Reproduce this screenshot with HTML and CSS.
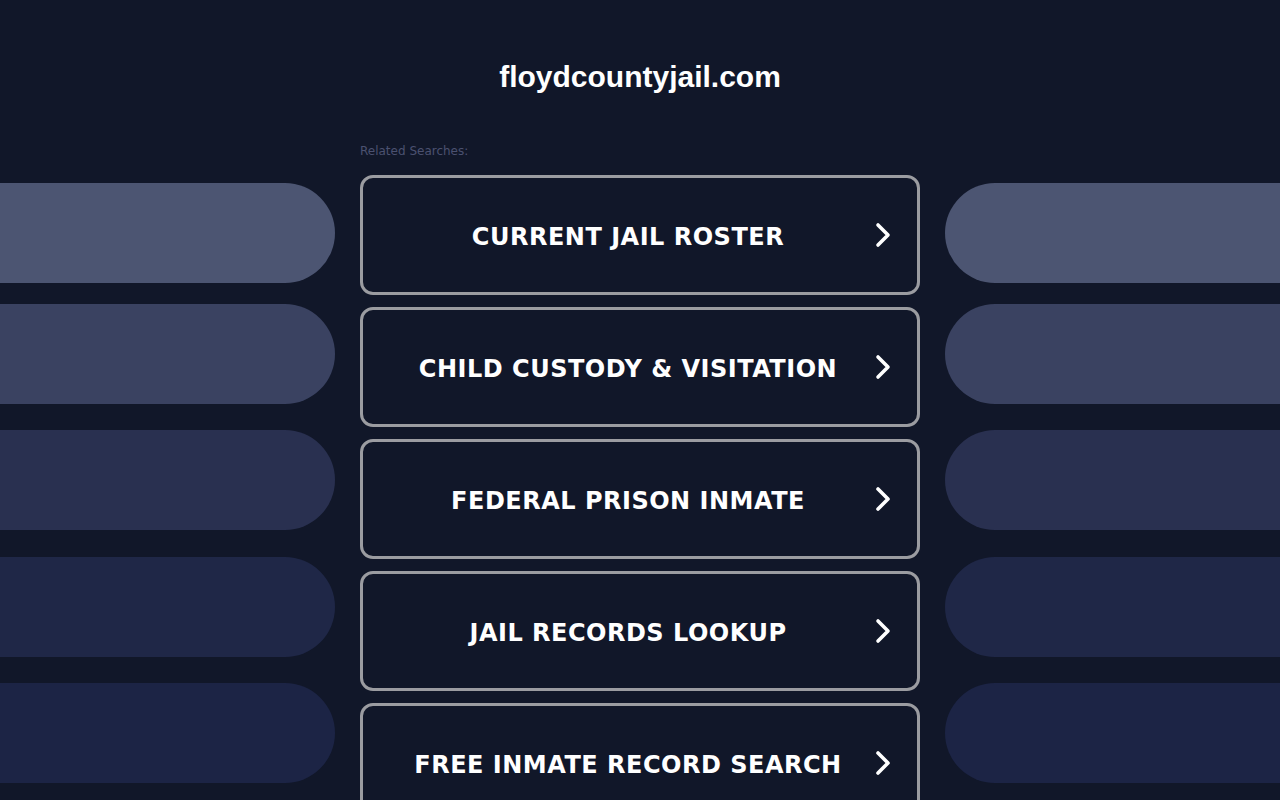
FILE: index.html
```html
<!DOCTYPE html>
<html lang="en">
<head>
<meta charset="utf-8">
<title>floydcountyjail.com</title>
<link rel="stylesheet" href="styles.css">
</head>
<body>
<div class="page">
  <header class="header">
    <h1 class="domain">floydcountyjail.com</h1>
  </header>
  <div class="layout">
    <div class="side side-left">
      <div class="pill pill-1"></div>
      <div class="pill pill-2"></div>
      <div class="pill pill-3"></div>
      <div class="pill pill-4"></div>
      <div class="pill pill-5"></div>
    </div>
    <main class="center">
      <div class="related">Related Searches:</div>
      <ul class="links">
        <li><a class="link" href="#"><span class="label">CURRENT JAIL ROSTER</span><svg class="chev" viewBox="0 0 16 26"><path d="M3 3 L13 13 L3 23" /></svg></a></li>
        <li><a class="link" href="#"><span class="label">CHILD CUSTODY &amp; VISITATION</span><svg class="chev" viewBox="0 0 16 26"><path d="M3 3 L13 13 L3 23" /></svg></a></li>
        <li><a class="link" href="#"><span class="label">FEDERAL PRISON INMATE</span><svg class="chev" viewBox="0 0 16 26"><path d="M3 3 L13 13 L3 23" /></svg></a></li>
        <li><a class="link" href="#"><span class="label">JAIL RECORDS LOOKUP</span><svg class="chev" viewBox="0 0 16 26"><path d="M3 3 L13 13 L3 23" /></svg></a></li>
        <li><a class="link" href="#"><span class="label">FREE INMATE RECORD SEARCH</span><svg class="chev" viewBox="0 0 16 26"><path d="M3 3 L13 13 L3 23" /></svg></a></li>
      </ul>
    </main>
    <div class="side side-right">
      <div class="pill pill-1"></div>
      <div class="pill pill-2"></div>
      <div class="pill pill-3"></div>
      <div class="pill pill-4"></div>
      <div class="pill pill-5"></div>
    </div>
  </div>
</div>
</body>
</html>
```
FILE: styles.css
```css
html, body {
  margin: 0;
  padding: 0;
  background: #111729;
  height: 100%;
  overflow: hidden;
}
.page {
  width: 1280px;
  height: 800px;
  overflow: hidden;
}
.header {
  height: 140px;
  padding-top: 58px;
  box-sizing: border-box;
  text-align: center;
}
.domain {
  margin: 0;
  font-family: "Liberation Sans", Arial, sans-serif;
  font-weight: bold;
  font-size: 30px;
  line-height: 38px;
  color: #ffffff;
}
.layout {
  display: flex;
  gap: 25px;
}
.side {
  width: 335px;
  flex: none;
  display: flex;
  flex-direction: column;
  padding-top: 43px;
}
.pill {
  height: 100px;
  flex: none;
}
.side-left .pill { border-radius: 0 50px 50px 0; }
.side-right .pill { border-radius: 50px 0 0 50px; }
.pill-1 { background: #4c5572; }
.pill-2 { background: #3a4261; margin-top: 21px; }
.pill-3 { background: #293050; margin-top: 26px; }
.pill-4 { background: #1f2747; margin-top: 27px; }
.pill-5 { background: #1c2445; margin-top: 26px; }
.center {
  width: 560px;
  flex: none;
}
.related {
  font-family: "DejaVu Sans", Verdana, sans-serif;
  font-size: 12px;
  line-height: 16px;
  color: #4b5170;
  padding-top: 3px;
  height: 35px;
  box-sizing: border-box;
}
.links {
  list-style: none;
  margin: 0;
  padding: 0;
  display: flex;
  flex-direction: column;
  gap: 12px;
}
.link {
  display: flex;
  align-items: center;
  justify-content: center;
  position: relative;
  height: 120px;
  box-sizing: border-box;
  border: 3px solid #9b9ca1;
  border-radius: 13px;
  text-decoration: none;
  padding-right: 24px;
  padding-top: 4px;
}
.label {
  font-family: "DejaVu Sans", Verdana, sans-serif;
  font-weight: bold;
  font-size: 24px;
  letter-spacing: 0.5px;
  color: #ffffff;
}
.chev {
  position: absolute;
  right: 26px;
  top: 50%;
  width: 16px;
  height: 26px;
  margin-top: -13px;
}
.chev path {
  fill: none;
  stroke: #ffffff;
  stroke-width: 3.6;
  stroke-linecap: round;
  stroke-linejoin: round;
}
```
